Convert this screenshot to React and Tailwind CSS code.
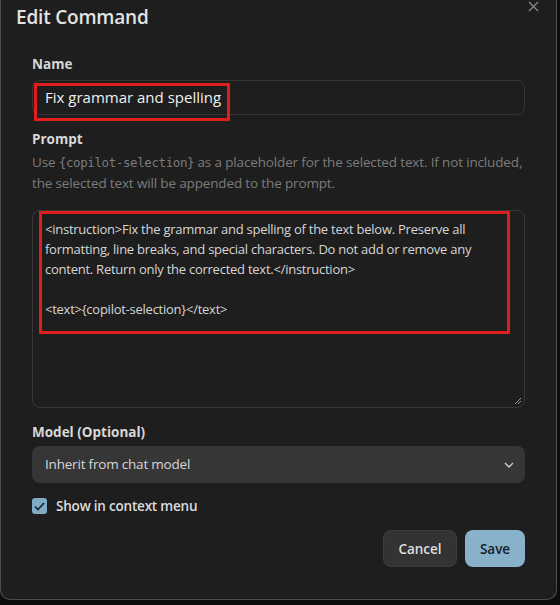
import React from "react";

function XIcon() {
  return (
    <svg width="11" height="11" viewBox="0 0 11 11" fill="none" stroke="#8a8a8a" strokeWidth="1.3">
      <path d="M1 1 L10 10 M10 1 L1 10" />
    </svg>
  );
}

export default function App() {
  const font = { fontFamily: '"Open Sans", "Noto Sans", sans-serif' };
  return (
    <div className="w-[560px] h-[605px] bg-[#0c0c0c] overflow-hidden" style={font}>
      <div className="relative w-[557px] h-[600px] bg-[#1e1e1e] border border-t-0 border-[#4d4d4d] rounded-b-[10px] flex flex-col">
        <button className="absolute right-[17px] top-[1px] p-0">
          <XIcon />
        </button>
        <h1 className="pl-[15px] pt-[3px] text-[19px] leading-[28px] font-semibold text-[#e3e3e3] tracking-[-0.2px]">
          Edit Command
        </h1>

        <div className="flex flex-col px-[31px] mt-[23px]">
          <label className="text-[13.5px] font-bold text-[#d8d8d8] leading-[20px]">Name</label>
          <div className="relative mt-[6px] h-[35px] rounded-[8px] border border-[#353535] flex items-center pl-[12px]">
            <span className="text-[15px] text-[#f0f0f0]">Fix grammar and spelling</span>
            <div className="absolute left-[1px] top-[2px] w-[196px] h-[38px] border-[3px] border-[#e01e1e]" />
          </div>

          <label className="mt-[14px] text-[13.5px] font-bold text-[#d8d8d8] leading-[20px]">Prompt</label>
          <p className="mt-[3px] text-[13.5px] leading-[21px] text-[#7c7c7c] tracking-[-0.15px]">
            Use <span className="text-[12.5px] tracking-[-0.4px]" style={{ fontFamily: '"DejaVu Sans Mono", monospace' }}>{"{copilot-selection}"}</span> as a placeholder for the selected text. If not included, the selected text will be appended to the prompt.
          </p>

          <div className="relative mt-[16px] h-[198px] rounded-[8px] border border-[#383838] px-[12px] pt-[8px]">
            <div className="text-[13px] leading-[20px] text-[#d6d6d6] tracking-[-0.25px] whitespace-pre">
              {"<instruction>Fix the grammar and spelling of the text below. Preserve all\nformatting, line breaks, and special characters. Do not add or remove any\ncontent. Return only the corrected text.</instruction>\n\n<text>{copilot-selection}</text>"}
            </div>
            <div className="absolute left-[6px] top-[0px] w-[471px] h-[123px] border-[3px] border-[#e01e1e]" />
            <svg className="absolute right-[2px] bottom-[2px]" width="8" height="8" viewBox="0 0 8 8" stroke="#9a9a9a" strokeWidth="1">
              <path d="M1 7 L7 1 M4 7 L7 4" />
            </svg>
          </div>

          <label className="mt-[14px] text-[13.5px] font-bold text-[#d8d8d8] leading-[20px]">Model (Optional)</label>
          <div className="mt-[4px] h-[37px] rounded-[8px] bg-[#363636] flex items-center justify-between pl-[13px] pr-[11px]">
            <span className="text-[13.5px] text-[#d6d6d6] tracking-[-0.2px]">Inherit from chat model</span>
            <svg width="10" height="6" viewBox="0 0 10 6" fill="none" stroke="#cfcfcf" strokeWidth="1.4">
              <path d="M1 1 L5 5 L9 1" />
            </svg>
          </div>

          <div className="mt-[13px] flex items-center gap-[9px]">
            <div className="w-[15px] h-[16px] rounded-[3px] bg-[#7fabc6] flex items-center justify-center">
              <svg width="11" height="9" viewBox="0 0 11 9" fill="none" stroke="#16202a" strokeWidth="1.6">
                <path d="M1 4.5 L4 7.5 L10 1" />
              </svg>
            </div>
            <span className="text-[13.5px] font-semibold text-[#dcdcdc] tracking-[-0.2px]">Show in context menu</span>
          </div>

          <div className="mt-[14px] flex justify-end gap-[8px]">
            <button className="w-[74px] h-[37px] rounded-[8px] bg-[#333333] border border-[#3c3c3c] text-[13.5px] font-semibold text-[#dedede]">
              Cancel
            </button>
            <button className="w-[60px] h-[37px] rounded-[8px] bg-[#88b2ca] text-[13.5px] font-semibold text-[#15202a]">
              Save
            </button>
          </div>
        </div>
      </div>
    </div>
  );
}
